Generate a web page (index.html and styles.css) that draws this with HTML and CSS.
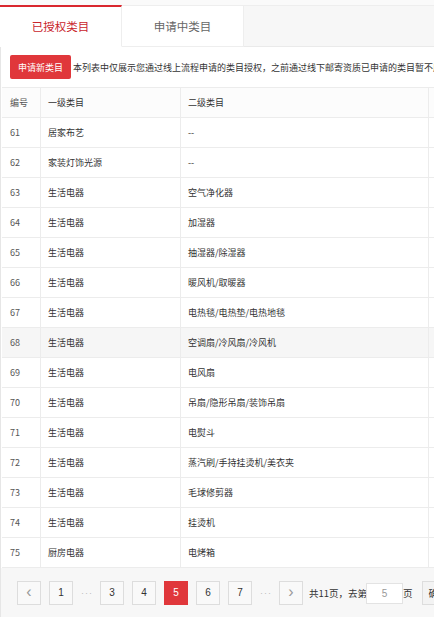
FILE: index.html
```html
<!DOCTYPE html>
<html lang="zh-CN">
<head>
  <meta charset="UTF-8" />
  <title>类目管理</title>
  <link rel="stylesheet" href="styles.css">
</head>
<body>
  <div class="tabs">
    <div class="tab active">已授权类目</div>
    <div class="tab">申请中类目</div>
    <div class="tab-rest"></div>
  </div>
  <div class="panel">
    <div class="toolbar">
      <button class="btn-red">申请新类目</button>
      <span class="note">本列表中仅展示您通过线上流程申请的类目授权，之前通过线下邮寄资质已申请的类目暂不展示</span>
    </div>
    <table class="cat-table">
      <thead>
        <tr><th class="c-no">编号</th><th class="c-first">一级类目</th><th class="c-second">二级类目</th><th class="c-more">状态</th></tr>
      </thead>
      <tbody>
        <tr><td>61</td><td>居家布艺</td><td>--</td><td></td></tr>
        <tr><td>62</td><td>家装灯饰光源</td><td>--</td><td></td></tr>
        <tr><td>63</td><td>生活电器</td><td>空气净化器</td><td></td></tr>
        <tr><td>64</td><td>生活电器</td><td>加湿器</td><td></td></tr>
        <tr><td>65</td><td>生活电器</td><td>抽湿器/除湿器</td><td></td></tr>
        <tr><td>66</td><td>生活电器</td><td>暖风机/取暖器</td><td></td></tr>
        <tr><td>67</td><td>生活电器</td><td>电热毯/电热垫/电热地毯</td><td></td></tr>
        <tr class="hover"><td>68</td><td>生活电器</td><td>空调扇/冷风扇/冷风机</td><td></td></tr>
        <tr><td>69</td><td>生活电器</td><td>电风扇</td><td></td></tr>
        <tr><td>70</td><td>生活电器</td><td>吊扇/隐形吊扇/装饰吊扇</td><td></td></tr>
        <tr><td>71</td><td>生活电器</td><td>电熨斗</td><td></td></tr>
        <tr><td>72</td><td>生活电器</td><td>蒸汽刷/手持挂烫机/美衣夹</td><td></td></tr>
        <tr><td>73</td><td>生活电器</td><td>毛球修剪器</td><td></td></tr>
        <tr><td>74</td><td>生活电器</td><td>挂烫机</td><td></td></tr>
        <tr><td>75</td><td>厨房电器</td><td>电烤箱</td><td></td></tr>
      </tbody>
    </table>
    <div class="pager">
      <a class="pg arrow">&lsaquo;</a>
      <a class="pg">1</a>
      <span class="dots">···</span>
      <a class="pg">3</a>
      <a class="pg">4</a>
      <a class="pg current">5</a>
      <a class="pg">6</a>
      <a class="pg">7</a>
      <span class="dots">···</span>
      <a class="pg arrow">&rsaquo;</a>
      <span class="total">共11页，去第</span>
      <input class="goto" type="text" value="5">
      <span class="total">页</span>
      <button class="btn-go">确定</button>
    </div>
  </div>
</body>
</html>
```

FILE: styles.css
```css
body {
  margin: 0;
  width: 434px;
  height: 617px;
  overflow: hidden;
  background: #fafafa;
  font-family: "Noto Sans CJK SC", "Microsoft YaHei", sans-serif;
  font-size: 9px;
  color: #333;
}

.tabs {
  display: flex;
  margin-top: 5px;
  height: 42px;
  width: 600px;
}

.tab {
  width: 121px;
  line-height: 40px;
  text-align: center;
  font-size: 11.5px;
  color: #666;
  background: #fff;
  border-top: 1px solid #eee;
  border-right: 1px solid #eee;
  border-bottom: 1px solid #eee;
}

.tab.active {
  color: #c9252c;
  border-top: 2px solid #d9272e;
  border-bottom: 1px solid #fff;
  line-height: 39px;
}

.tab-rest {
  flex: 1;
  background: #f7f7f7;
  border-top: 1px solid #eee;
  border-bottom: 1px solid #eaeaea;
}

.panel {
  background: #fff;
  border-left: 1px solid #e6e6e6;
  width: 700px;
}

.toolbar {
  display: flex;
  align-items: center;
  height: 40px;
  padding-left: 9px;
  white-space: nowrap;
}

.btn-red {
  width: 61px;
  height: 24px;
  padding: 0;
  background: #e0373b;
  color: #fff;
  border: none;
  border-radius: 2px;
  font-family: inherit;
  font-size: 9px;
  margin-right: 2px;
}

.note {
  color: #333;
  font-size: 9px;
}

.cat-table {
  border-collapse: collapse;
  width: 640px;
  margin-left: 1px;
}

.cat-table th,
.cat-table td {
  height: 29px;
  padding: 0 0 0 7px;
  text-align: left;
  font-weight: normal;
  font-size: 9px;
  border: 1px solid #ececec;
  border-left: none;
  color: #333;
}

.cat-table th {
  background: #fcfcfc;
}

.cat-table td:first-child,
.cat-table th:first-child {
  padding-left: 8px;
  color: #555;
}

.c-no { width: 30px; }
.c-first { width: 132px; }
.c-second { width: 240px; }

.cat-table tr.hover td {
  background: #f6f6f6;
}

.pager {
  display: flex;
  align-items: center;
  gap: 8px;
  height: 50px;
  padding-left: 16px;
  background: #f7f7f7;
  white-space: nowrap;
}

.pg {
  flex: none;
  width: 22px;
  height: 22px;
  line-height: 22px;
  text-align: center;
  border: 1px solid #ddd;
  background: #f9f9f9;
  color: #333;
  font-family: "Liberation Sans", sans-serif;
  font-size: 10px;
}

.pg.arrow {
  font-size: 16px;
  color: #999;
  line-height: 20px;
}

.pg.current {
  background: #e0373b;
  border-color: #e0373b;
  color: #fff;
}

.dots {
  flex: none;
  width: 11px;
  color: #bbb;
  font-family: "Liberation Sans", sans-serif;
  font-size: 9px;
  letter-spacing: 1px;
  text-align: center;
}

.total {
  color: #333;
  font-size: 9.5px;
  margin-left: -2px;
}

.goto {
  flex: none;
  width: 37px;
  height: 21px;
  box-sizing: border-box;
  border: 1px solid #e3e3e3;
  background: #fff;
  text-align: center;
  color: #999;
  font-size: 10px;
  padding: 0;
  margin-left: -9px;
  margin-right: -6px;
}

.btn-go {
  flex: none;
  height: 24px;
  border: 1px solid #ddd;
  background: #f3f3f3;
  color: #333;
  font-family: inherit;
  font-size: 9.5px;
  margin-left: 1px;
}
```
